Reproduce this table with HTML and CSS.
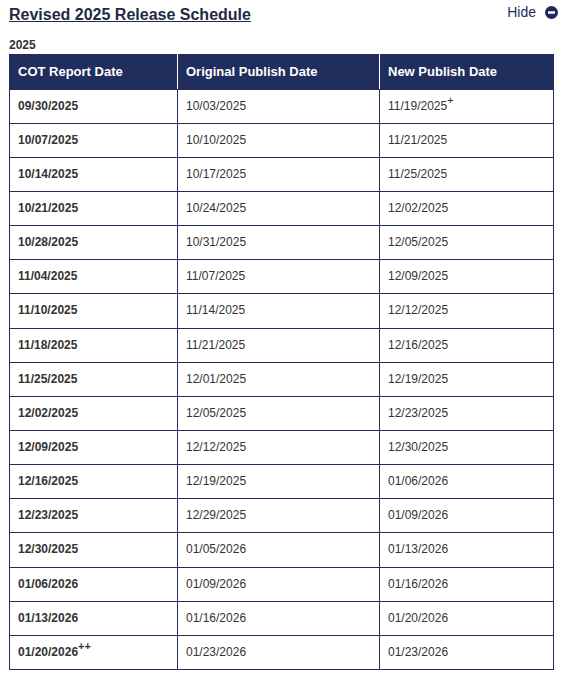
FILE: index.html
```html
<!DOCTYPE html>
<html>
<head>
<meta charset="utf-8">
<link rel="stylesheet" href="styles.css">
</head>
<body>
<div class="wrap">
  <div class="top">
    <a class="title" href="#">Revised 2025 Release Schedule</a>
    <span class="hide">Hide <svg class="ico" width="13" height="13" viewBox="0 0 13 13"><circle cx="6.5" cy="6.5" r="6.5" fill="#1f2a5c"/><rect x="3" y="5.3" width="7" height="2.4" fill="#fff"/></svg></span>
  </div>
  <div class="year">2025</div>
  <table class="sched">
    <colgroup><col class="c1"><col class="c2"><col class="c3"></colgroup>
    <thead>
      <tr><th>COT Report Date</th><th>Original Publish Date</th><th>New Publish Date</th></tr>
    </thead>
    <tbody>
      <tr><td>09/30/2025</td><td>10/03/2025</td><td>11/19/2025<sup>+</sup></td></tr>
      <tr><td>10/07/2025</td><td>10/10/2025</td><td>11/21/2025</td></tr>
      <tr><td>10/14/2025</td><td>10/17/2025</td><td>11/25/2025</td></tr>
      <tr><td>10/21/2025</td><td>10/24/2025</td><td>12/02/2025</td></tr>
      <tr><td>10/28/2025</td><td>10/31/2025</td><td>12/05/2025</td></tr>
      <tr><td>11/04/2025</td><td>11/07/2025</td><td>12/09/2025</td></tr>
      <tr><td>11/10/2025</td><td>11/14/2025</td><td>12/12/2025</td></tr>
      <tr><td>11/18/2025</td><td>11/21/2025</td><td>12/16/2025</td></tr>
      <tr><td>11/25/2025</td><td>12/01/2025</td><td>12/19/2025</td></tr>
      <tr><td>12/02/2025</td><td>12/05/2025</td><td>12/23/2025</td></tr>
      <tr><td>12/09/2025</td><td>12/12/2025</td><td>12/30/2025</td></tr>
      <tr><td>12/16/2025</td><td>12/19/2025</td><td>01/06/2026</td></tr>
      <tr><td>12/23/2025</td><td>12/29/2025</td><td>01/09/2026</td></tr>
      <tr><td>12/30/2025</td><td>01/05/2026</td><td>01/13/2026</td></tr>
      <tr><td>01/06/2026</td><td>01/09/2026</td><td>01/16/2026</td></tr>
      <tr><td>01/13/2026</td><td>01/16/2026</td><td>01/20/2026</td></tr>
      <tr><td>01/20/2026<sup>++</sup></td><td>01/23/2026</td><td>01/23/2026</td></tr>
    </tbody>
  </table>
</div>
</body>
</html>
```
FILE: styles.css
```css
html, body { margin: 0; padding: 0; background: #fff; }
body { font-family: "Liberation Sans", Arial, sans-serif; color: #333; }
.wrap { padding: 5px 5px 0 9px; }
.top { display: flex; justify-content: space-between; align-items: flex-start; height: 33px; }
.title { font-size: 16px; font-weight: bold; color: #1f2a44; text-decoration: underline; line-height: 19px; }
.hide { font-size: 14px; color: #1f2a5c; display: flex; align-items: center; gap: 9px; line-height: 16px; margin-top: -1px; }
.ico { display: block; }
.year { font-size: 12px; font-weight: bold; color: #333; line-height: 14px; margin-bottom: 2px; }
.sched { border-collapse: collapse; width: 544px; table-layout: fixed; }
.c1 { width: 168px; }
.c2 { width: 202px; }
.c3 { width: 174px; }
.sched th { background: #212d5d; color: #fff; font-size: 13px; font-weight: bold; text-align: left; padding: 8px; line-height: 17.6px; border: 1px solid #212d5d; border-right-color: #fff; }
.sched th:last-child { border-right-color: #212d5d; }
.sched td { font-size: 12px; color: #333; padding: 8px; line-height: 1.42857143; border: 1px solid #212d5d; }
.sched td:first-child { font-weight: bold; }
.sched sup { font-size: 11px; line-height: 0; vertical-align: 6px; }
```
